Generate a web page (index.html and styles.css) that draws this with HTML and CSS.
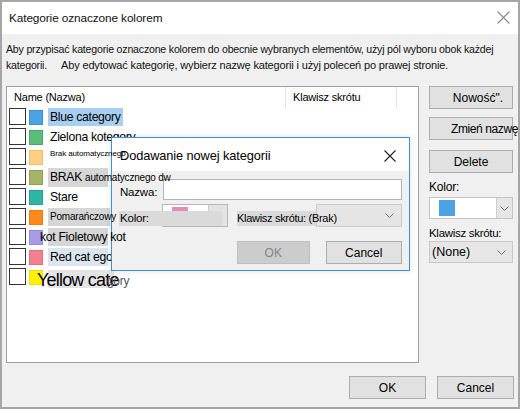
FILE: index.html
```html
<!DOCTYPE html>
<html lang="pl">
<head>
<meta charset="utf-8">
<title>Kategorie oznaczone kolorem</title>
<link rel="stylesheet" href="styles.css">
</head>
<body>
<div class="window">
  <div class="titlebar">
    <span class="title">Kategorie oznaczone kolorem</span>
    <svg class="close" width="13" height="13" viewBox="0 0 13 13"><path d="M0.5 0.5 L12.5 12.5 M12.5 0.5 L0.5 12.5" stroke="#8a8a8a" stroke-width="1.1" fill="none"/></svg>
  </div>
  <div class="content">
    <p class="desc"><span class="d1">Aby przypisać kategorie oznaczone kolorem do obecnie wybranych elementów, użyj pól wyboru obok każdej<br>kategorii.</span><span class="d2">Aby edytować kategorię, wybierz nazwę kategorii i użyj poleceń po prawej stronie.</span></p>
    <div class="main">
      <div class="list">
        <div class="lhead">
          <div class="c-name">Name (Nazwa)</div>
          <div class="c-key">Klawisz skrótu</div>
          <div class="c-rest"></div>
        </div>
        <div class="row"><span class="cb"></span><span class="sw sw-blue"></span><span class="lbl sel">Blue category</span></div>
        <div class="row"><span class="cb"></span><span class="sw sw-green"></span><span class="lbl">Zielona kotegory</span></div>
        <div class="row"><span class="cb"></span><span class="sw sw-peach"></span><span class="lbl tiny"><span class="over">Brak automatycznego</span></span></div>
        <div class="row"><span class="cb"></span><span class="sw sw-olive"></span><span class="lbl grey w60">BRAK <span class="over small">automatycznego dw</span></span></div>
        <div class="row"><span class="cb"></span><span class="sw sw-teal"></span><span class="lbl">Stare</span></div>
        <div class="row"><span class="cb"></span><span class="sw sw-orange"></span><span class="lbl grey small w62"><span class="over">Pomarańczowy</span></span></div>
        <div class="row"><span class="cb"></span><span class="sw sw-violet"></span><span class="lbl grey w60"><span class="over left">kot Fioletowy kot</span></span></div>
        <div class="row"><span class="cb"></span><span class="sw sw-yellow-red sw-red"></span><span class="lbl bluegrey w60">Red cat egory</span></div>
        <div class="row"><span class="cb"></span><span class="sw sw-yellow"></span><span class="lbl big grey2"><span class="ytxt">Yellow cate</span></span><span class="rest">gory</span></div>
      </div>
      <div class="side">
        <button class="btn new">Nowość".</button>
        <button class="btn ren">Zmień nazwę</button>
        <button class="btn del">Delete</button>
        <div class="slabel k1">Kolor:</div>
        <div class="ccombo"><span class="cswatch"></span><span class="carrow"><svg width="9" height="5" viewBox="0 0 9 5"><path d="M0.5 0.5 L4.5 4.5 L8.5 0.5" stroke="#707070" fill="none"/></svg></span></div>
        <div class="slabel k2">Klawisz skrótu:</div>
        <div class="dd"><span>(None)</span><svg width="9" height="5" viewBox="0 0 9 5"><path d="M0.5 0.5 L4.5 4.5 L8.5 0.5" stroke="#707070" fill="none"/></svg></div>
      </div>
    </div>
    <div class="footer">
      <button class="btn fbtn">OK</button>
      <button class="btn fbtn">Cancel</button>
    </div>
  </div>

  <div class="subdlg">
    <div class="stitle">
      <span>Dodawanie nowej kategorii</span>
      <svg width="12" height="12" viewBox="0 0 12 12"><path d="M0.5 0.5 L11.5 11.5 M11.5 0.5 L0.5 11.5" stroke="#222" stroke-width="1.1" fill="none"/></svg>
    </div>
    <div class="sbody">
      <div class="srow r1">
        <span class="slbl">Nazwa:</span>
        <span class="input"></span>
      </div>
      <div class="srow r2">
        <span class="klbl">Kolor:</span>
        <span class="kcombo"><span class="kwhite"><span class="pink"></span></span><span class="kbtn"></span></span>
        <span class="hlbl">Klawisz skrótu: (Brak)</span>
        <span class="hdd"><svg width="9" height="5" viewBox="0 0 9 5"><path d="M0.5 0.5 L4.5 4.5 L8.5 0.5" stroke="#707070" fill="none"/></svg></span>
      </div>
      <div class="srow r3">
        <button class="btn sok">OK</button>
        <button class="btn scancel">Cancel</button>
      </div>
    </div>
  </div>
</div>
</body>
</html>
```
FILE: styles.css
```css
* { box-sizing: border-box; }
body {
  margin: 0;
  font-family: "Liberation Sans", Arial, sans-serif;
  font-size: 12px;
  color: #000;
}
.window {
  position: relative;
  width: 520px;
  height: 409px;
  border: 2px solid #a6a6a6;
  background: #f0f0f0;
  display: flex;
  flex-direction: column;
  overflow: hidden;
}
.titlebar {
  height: 32px;
  flex: none;
  background: #fff;
  display: flex;
  align-items: center;
  justify-content: space-between;
  padding: 0 8px 0 7px;
}
.title { font-size: 11.8px; color: #111; letter-spacing: -0.1px; }
.close { margin-top: -1px; }
.content {
  flex: 1;
  padding: 7px 4px 6px 4px;
  display: flex;
  flex-direction: column;
}
.desc {
  margin: 0;
  height: 45px;
  line-height: 16px;
  color: #111;
  white-space: nowrap;
}
.d1 { font-size: 10.6px; letter-spacing: -0.2px; margin-right: 14px; }
.d2 { font-size: 11px; letter-spacing: -0.15px; }
.main {
  display: flex;
  gap: 10px;
  height: 277px;
  flex: none;
}
.list {
  width: 413px;
  height: 277px;
  background: #fff;
  border: 1px solid #a0a0a0;
  padding: 0 0 0 2px;
}
.lhead {
  display: flex;
  height: 21px;
  margin-left: -2px;
  font-size: 11px;
  letter-spacing: -0.2px;
}
.lhead > div { line-height: 21px; padding-left: 7px; }
.c-name { width: 279px; border-right: 1px solid #e5e5e5; }
.c-key { width: 111px; border-right: 1px solid #e5e5e5; padding-left: 6px; }
.row {
  height: 20px;
  display: flex;
  align-items: center;
}
.cb {
  width: 17px;
  height: 17px;
  border: 1px solid #333;
  background: #fff;
  flex: none;
  align-self: flex-start;
}
.sw {
  width: 14px;
  height: 15px;
  margin-left: 3px;
  margin-top: -2px;
  flex: none;
  border: 1px solid;
}
.sw-blue { background: #4ba3e6; border-color: #3a8fd4; }
.sw-green { background: #5cbd7a; border-color: #49a866; }
.sw-peach { background: #ffd084; border-color: #f5bd66; }
.sw-olive { background: #a5b469; border-color: #8f9e52; }
.sw-teal { background: #2db5a6; border-color: #22a090; }
.sw-orange { background: #ff8a1c; border-color: #f47a08; }
.sw-violet { background: #a99ce6; border-color: #9688d8; }
.sw-red { background: #f2808e; border-color: #e86c7c; }
.sw-yellow { background: #fff200; border-color: #f0e000; }
.lbl {
  margin-left: 5px;
  padding: 0 2px;
  font-size: 12.2px;
  letter-spacing: -0.3px;
  line-height: 18px;
  white-space: nowrap;
  margin-top: -2px;
  flex: none;
}
.sel { background: #a8cff2; }
.grey { background: #d6d6d6; }
.grey2 { background: #e4e4e4; }
.bluegrey { background: #dce6ef; }
.w60 { width: 60px; }
.w62 { width: 62px; }
.tiny { font-size: 8px; line-height: 10px; align-self: flex-start; margin-top: 1px; letter-spacing: -0.1px; }
.small { font-size: 10px; letter-spacing: -0.2px; }
.over { position: relative; z-index: 5; }
.left { margin-left: -10px; }
.big { font-size: 18px; line-height: 20px; margin-top: 2px; height: 18px; width: 66px; padding: 0; letter-spacing: -0.8px; }
.ytxt { display: inline-block; margin-left: -11px; }
.rest { margin-left: -7px; color: #555; font-size: 12px; margin-top: 6px; letter-spacing: -0.3px; }

.side {
  width: 84px;
  display: flex;
  flex-direction: column;
}
.btn {
  font-family: "Liberation Sans", Arial, sans-serif;
  font-size: 12px;
  color: #000;
  background: #e1e1e1;
  border: 1px solid #adadad;
  height: 23px;
  padding: 0;
  margin: 0;
  white-space: nowrap;
  overflow: visible;
}
.side .btn { width: 84px; }
.new { padding-left: 14px; }
.ren { margin-top: 8px; text-align: left; padding-left: 21px; letter-spacing: -0.4px; }
.del { margin-top: 10px; }
.slabel { line-height: 16px; font-size: 12px; letter-spacing: -0.2px; }
.k1 { margin-top: 6px; }
.k2 { margin-top: 6px; letter-spacing: -0.3px; font-size: 11.5px; }
.ccombo {
  margin-top: 2px;
  height: 22px;
  background: #fff;
  border: 1px solid #c4c4c4;
  display: flex;
  align-items: center;
  justify-content: space-between;
}
.cswatch { width: 16px; height: 16px; background: #4ba3e6; margin-left: 9px; }
.carrow {
  width: 16px;
  height: 20px;
  background: #e6e6e6;
  border-left: 1px solid #cfcfcf;
  display: flex;
  align-items: center;
  justify-content: center;
}
.dd {
  height: 22px;
  background: #e6e6e6;
  border: 1px solid #c8c8c8;
  display: flex;
  align-items: center;
  justify-content: space-between;
  padding: 0 6px 0 2px;
  font-size: 12.5px;
}
.footer {
  margin-top: 13px;
  display: flex;
  justify-content: flex-end;
  gap: 11px;
}
.fbtn { width: 77px; }

/* overlay dialog */
.subdlg {
  position: absolute;
  left: 109px;
  top: 135px;
  width: 299px;
  height: 134px;
  border: 1px solid #3d8fdc;
  background: #f0f0f0;
  z-index: 3;
  display: flex;
  flex-direction: column;
  box-shadow: 0 0 6px rgba(0,0,0,0.12);
}
.stitle {
  height: 33px;
  background: #fff;
  display: flex;
  align-items: center;
  justify-content: space-between;
  padding: 2px 13px 0 8px;
  font-size: 12.8px;
  letter-spacing: -0.1px;
  flex: none;
}
.sbody { padding: 7px 7px 0 8px; }
.srow { display: flex; align-items: center; }
.r1 { height: 22px; }
.slbl { width: 43px; padding-top: 6px; font-size: 11.5px; letter-spacing: -0.2px; }
.input { flex: 1; height: 21px; background: #fff; border: 1px solid #b4b4b4; }
.r2 { margin-top: 4px; height: 24px; }
.klbl {
  position: relative;
  z-index: 2;
  width: 103px;
  height: 15px;
  margin-top: 5px;
  margin-right: -60px;
  margin-left: -1px;
  background: #dadada;
  font-size: 11.5px;
  line-height: 15px;
  padding-left: 1px;
  letter-spacing: -0.2px;
}
.kcombo {
  width: 66px;
  height: 23px;
  display: flex;
  border: 1px solid #b8b8b8;
  align-self: flex-start;
}
.kwhite { width: 45px; background: #fff; position: relative; }
.pink { position: absolute; left: 9px; top: 2px; width: 16px; height: 14px; background: #e58cb8; }
.kbtn { flex: 1; background: #e3e3e3; border-left: 1px solid #c8c8c8; }
.hlbl {
  position: relative;
  z-index: 2;
  margin-left: 9px;
  width: 79px;
  height: 15px;
  margin-top: 5px;
  margin-right: -79px;
  background: #dadada;
  font-size: 11px;
  letter-spacing: -0.3px;
  line-height: 15px;
  white-space: nowrap;
  flex: none;
}
.hdd {
  width: 86px;
  height: 23px;
  margin-left: 79px;
  align-self: flex-start;
  background: #e5e5e5;
  border: 1px solid #cacaca;
  display: flex;
  align-items: center;
  justify-content: flex-end;
  padding-right: 7px;
}
.r3 { margin-top: 13px; }
.sok { width: 73px; background: #cccccc; border-color: #bfbfbf; color: #838383; margin-left: 117px; }
.scancel { width: 77px; margin-left: 16px; }
```
